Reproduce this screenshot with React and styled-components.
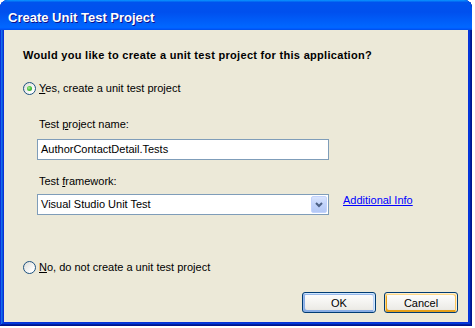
import React from "react";
import styled, { createGlobalStyle } from "styled-components";

/* 全局 */
const GlobalStyle = createGlobalStyle`
    html, body {
        margin: 0;
        padding: 0;
        background: #fff;
    }
`;

const Window = styled.div`
    box-sizing: border-box;
    width: 472px;
    height: 326px;
    display: flex;
    flex-direction: column;
    padding: 0 4px 4px;
    border-radius: 8px 8px 0 0;
    background: #0831d9;
    box-shadow: inset -1px -1px #00138c, inset 1px 1px #0831d9,
        inset -2px -2px #001ea0, inset 2px 2px #166aee,
        inset -3px -3px #003bda, inset 3px 3px #0855dd;
`;

const TitleBar = styled.div`
    box-sizing: border-box;
    height: 30px;
    margin: 0 -4px;
    padding: 5px 0 0 8px;
    display: flex;
    align-items: center;
    border-radius: 8px 8px 0 0;
    background: linear-gradient(180deg, #0997ff, #0053ee 8%, #0050ee 40%, #06f 88%, #06f 93%, #005bff 95%, #0053ee 96%, #0053ee);
    color: #fff;
    font: bold 13px "Trebuchet MS", "Liberation Sans", sans-serif;
    text-shadow: 1px 1px #0f1089;
`;

const Body = styled.div`
    flex: 1;
    display: flex;
    flex-direction: column;
    padding: 19px 10px 9px 19px;
    background: #ece9d8;
    color: #000;
    font: 11px/13px Tahoma, "Liberation Sans", sans-serif;
`;

const Heading = styled.p`
    margin: 0;
    font-weight: bold;
    letter-spacing: 0.3px;
`;

const RadioRow = styled.label`
    display: flex;
    align-items: center;
    gap: 3px;
    margin-top: ${p => p.$top}px;
    height: 13px;
`;

const RadioCircle = styled.span`
    box-sizing: border-box;
    width: 13px;
    height: 13px;
    flex: none;
    display: flex;
    align-items: center;
    justify-content: center;
    border: 1px solid #1c5180;
    border-radius: 50%;
    background: linear-gradient(135deg, #dcdcd7 0%, #fff 80%);

    &::after {
        content: "";
        display: ${p => (p.$checked ? "block" : "none")};
        width: 5px;
        height: 5px;
        border-radius: 50%;
        background: radial-gradient(circle at 40% 40%, #b2f0a0 0%, #4cc23e 45%, #21a121 100%);
    }
`;

const Group = styled.div`
    margin-top: 23px;
    padding-left: 16px;
    display: flex;
    flex-direction: column;
`;

const FieldLabel = styled.div`
    margin-top: ${p => p.$top || 0}px;
`;

const TextBox = styled.div`
    box-sizing: border-box;
    width: 292px;
    height: 21px;
    margin: 8px 0 0 -2px;
    padding: 0 3px;
    display: flex;
    align-items: center;
    border: 1px solid #7f9db9;
    background: #fff;
`;

const SelectRow = styled.div`
    display: flex;
    align-items: flex-start;
    margin: 6px 0 0 -2px;
`;

const Select = styled.div`
    box-sizing: border-box;
    width: 292px;
    height: 21px;
    padding: 1px;
    display: flex;
    align-items: center;
    border: 1px solid #7f9db9;
    background: #fff;

    span {
        flex: 1;
        padding-left: 2px;
    }
`;

const DropButton = styled.div`
    box-sizing: border-box;
    width: 16px;
    height: 17px;
    display: flex;
    align-items: center;
    justify-content: center;
    border: 1px solid #c3d3fd;
    border-radius: 2px;
    background: linear-gradient(180deg, #d9e4fd 0%, #c1d3fb 50%, #b4c8f5 100%);
`;

const Link = styled.a`
    margin-left: 14px;
    color: #0000ff;
    text-decoration: underline;
    cursor: pointer;
`;

const ButtonRow = styled.div`
    display: flex;
    justify-content: flex-end;
    gap: 8px;
    margin-top: 18px;
`;

const Button = styled.button`
    box-sizing: border-box;
    width: 74px;
    height: 21px;
    padding: 0;
    border: 1px solid #003c74;
    border-radius: 3px;
    background: linear-gradient(180deg, #fff, #ecebe6 86%, #d6d0c5);
    color: #000;
    font: 11px Tahoma, "Liberation Sans", sans-serif;
    box-shadow: ${p => (p.$variant === "default"
        ? "inset -1px 1px #cee7ff, inset 1px 2px #98b8ea, inset -2px 2px #bcd4f6, inset 1px -1px #89ade4, inset 2px -2px #89ade4"
        : p.$variant === "hover"
            ? "inset -1px 1px #fff0cf, inset 1px 2px #fdd889, inset -2px 2px #fbc761, inset 2px -2px #e5a01a"
            : "none")};
`;

const Radio = ({ checked, top, children }) => (
    <RadioRow $top={top}>
        <RadioCircle $checked={checked} />
        <span>{children}</span>
    </RadioRow>
);

const App = function App() {
    return <>
        <GlobalStyle />
        <Window>
            <TitleBar>Create Unit Test Project</TitleBar>
            <Body>
                <Heading>Would you like to create a unit test project for this application?</Heading>
                <Radio checked top={20}><u>Y</u>es, create a unit test project</Radio>
                <Group>
                    <FieldLabel>Test <u>p</u>roject name:</FieldLabel>
                    <TextBox>AuthorContactDetail.Tests</TextBox>
                    <FieldLabel $top={15}>Test <u>f</u>ramework:</FieldLabel>
                    <SelectRow>
                        <Select>
                            <span>Visual Studio Unit Test</span>
                            <DropButton>
                                <svg width="8" height="6" viewBox="0 0 8 6">
                                    <polyline points="1,1 4,4 7,1" fill="none" stroke="#4d6185" strokeWidth="2" />
                                </svg>
                            </DropButton>
                        </Select>
                        <Link>Additional Info</Link>
                    </SelectRow>
                </Group>
                <Radio top={46}><u>N</u>o, do not create a unit test project</Radio>
                <ButtonRow>
                    <Button $variant="default">OK</Button>
                    <Button $variant="hover">Cancel</Button>
                </ButtonRow>
            </Body>
        </Window>
    </>;
};

export default App;
